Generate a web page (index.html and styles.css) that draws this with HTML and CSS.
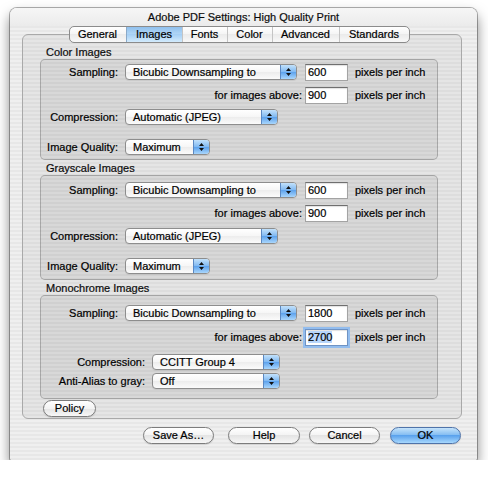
FILE: index.html
```html
<!DOCTYPE html>
<html>
<head>
<meta charset="utf-8">
<link rel="stylesheet" href="styles.css">
</head>
<body>
<div class="window">
  <div class="titlebar">Adobe PDF Settings: High Quality Print</div>
  <div class="pane">
    <div class="tabs">
      <div class="tabbar">
        <span class="tab t-general">General</span>
        <span class="tab t-images sel">Images</span>
        <span class="tab t-fonts">Fonts</span>
        <span class="tab t-color">Color</span>
        <span class="tab t-adv">Advanced</span>
        <span class="tab t-std">Standards</span>
      </div>
    </div>

    <div class="section-title first">Color Images</div>
    <div class="group g-color">
      <div class="row">
        <span class="lbl">Sampling:</span>
        <div class="popup w-sampling"><span class="pv">Bicubic Downsampling to</span><span class="arrows"><svg width="7" height="10" viewBox="0 0 7 10"><path d="M3.5 1 L6 4 L1 4 Z M1 6 L6 6 L3.5 9 Z" fill="#111"/></svg></span></div>
        <span class="field">600</span>
        <span class="unit">pixels per inch</span>
      </div>
      <div class="row gap-a">
        <span class="lbl lbl-for">for images above:</span>
        <span class="field">900</span>
        <span class="unit">pixels per inch</span>
      </div>
      <div class="row gap-b">
        <span class="lbl">Compression:</span>
        <div class="popup w-comp"><span class="pv">Automatic (JPEG)</span><span class="arrows"><svg width="7" height="10" viewBox="0 0 7 10"><path d="M3.5 1 L6 4 L1 4 Z M1 6 L6 6 L3.5 9 Z" fill="#111"/></svg></span></div>
      </div>
      <div class="row gap-c">
        <span class="lbl">Image Quality:</span>
        <div class="popup w-quality"><span class="pv">Maximum</span><span class="arrows"><svg width="7" height="10" viewBox="0 0 7 10"><path d="M3.5 1 L6 4 L1 4 Z M1 6 L6 6 L3.5 9 Z" fill="#111"/></svg></span></div>
      </div>
    </div>

    <div class="section-title">Grayscale Images</div>
    <div class="group g-gray">
      <div class="row">
        <span class="lbl">Sampling:</span>
        <div class="popup w-sampling"><span class="pv">Bicubic Downsampling to</span><span class="arrows"><svg width="7" height="10" viewBox="0 0 7 10"><path d="M3.5 1 L6 4 L1 4 Z M1 6 L6 6 L3.5 9 Z" fill="#111"/></svg></span></div>
        <span class="field">600</span>
        <span class="unit">pixels per inch</span>
      </div>
      <div class="row gap-a">
        <span class="lbl lbl-for">for images above:</span>
        <span class="field">900</span>
        <span class="unit">pixels per inch</span>
      </div>
      <div class="row gap-a">
        <span class="lbl">Compression:</span>
        <div class="popup w-comp"><span class="pv">Automatic (JPEG)</span><span class="arrows"><svg width="7" height="10" viewBox="0 0 7 10"><path d="M3.5 1 L6 4 L1 4 Z M1 6 L6 6 L3.5 9 Z" fill="#111"/></svg></span></div>
      </div>
      <div class="row gap-c">
        <span class="lbl">Image Quality:</span>
        <div class="popup w-quality"><span class="pv">Maximum</span><span class="arrows"><svg width="7" height="10" viewBox="0 0 7 10"><path d="M3.5 1 L6 4 L1 4 Z M1 6 L6 6 L3.5 9 Z" fill="#111"/></svg></span></div>
      </div>
    </div>

    <div class="section-title">Monochrome Images</div>
    <div class="group g-mono">
      <div class="row">
        <span class="lbl">Sampling:</span>
        <div class="popup w-sampling"><span class="pv">Bicubic Downsampling to</span><span class="arrows"><svg width="7" height="10" viewBox="0 0 7 10"><path d="M3.5 1 L6 4 L1 4 Z M1 6 L6 6 L3.5 9 Z" fill="#111"/></svg></span></div>
        <span class="field">1800</span>
        <span class="unit">pixels per inch</span>
      </div>
      <div class="row gap-m1">
        <span class="lbl lbl-for">for images above:</span>
        <span class="field focused"><span class="selection">2700</span></span>
        <span class="unit">pixels per inch</span>
      </div>
      <div class="row gap-m2">
        <span class="lbl lbl-wide">Compression:</span>
        <div class="popup w-mono"><span class="pv">CCITT Group 4</span><span class="arrows"><svg width="7" height="10" viewBox="0 0 7 10"><path d="M3.5 1 L6 4 L1 4 Z M1 6 L6 6 L3.5 9 Z" fill="#111"/></svg></span></div>
      </div>
      <div class="row gap-m3">
        <span class="lbl lbl-wide">Anti-Alias to gray:</span>
        <div class="popup w-mono"><span class="pv">Off</span><span class="arrows"><svg width="7" height="10" viewBox="0 0 7 10"><path d="M3.5 1 L6 4 L1 4 Z M1 6 L6 6 L3.5 9 Z" fill="#111"/></svg></span></div>
      </div>
    </div>

    <div class="policy-row">
      <span class="btn btn-policy">Policy</span>
    </div>
  </div>

  <div class="buttons">
    <span class="btn btn-save">Save As…</span>
    <span class="btn btn-help">Help</span>
    <span class="btn btn-cancel">Cancel</span>
    <span class="btn btn-ok">OK</span>
  </div>
</div>
</body>
</html>
```

FILE: styles.css
```css
html, body {
  margin: 0;
  padding: 0;
  background: #ffffff;
}

body {
  font-family: "Liberation Sans", Arial, sans-serif;
  font-size: 11px;
  color: #000;
  -webkit-text-stroke: 0.2px #000;
}

.window {
  margin: 8px 0 0 10px;
  width: 467px;
  height: 452px;
  box-sizing: border-box;
  display: flex;
  flex-direction: column;
  border-radius: 7px 7px 2px 2px;
  background: repeating-linear-gradient(to bottom, #efefef 0, #efefef 2px, #e7e7e7 2px, #e7e7e7 4px);
  box-shadow: 0 0 0 1px rgba(0, 0, 0, 0.3), 0 7px 13px rgba(0, 0, 0, 0.5);
}

.titlebar {
  height: 18px;
  line-height: 18px;
  text-align: center;
  border-radius: 7px 7px 0 0;
  background: linear-gradient(to bottom, #f6f6f6, #ebebeb);
  color: #111;
}

.pane {
  margin: 8px 15px 0 12px;
  height: 385px;
  box-sizing: border-box;
  border: 1px solid #a9a9a9;
  border-radius: 6px;
  background: rgba(0, 0, 0, 0.04);
  padding: 0 23px 0 17px;
}

.tabs {
  display: flex;
  justify-content: center;
  margin-top: -9px;
  height: 17px;
}

.tabbar {
  display: flex;
  height: 17px;
  box-sizing: border-box;
  border: 1px solid #8b8b8b;
  border-radius: 5px;
  overflow: hidden;
  background: linear-gradient(to bottom, #ffffff, #f4f4f4 50%, #ebebeb 50%, #f8f8f8);
}

.tab {
  line-height: 15px;
  text-align: center;
  border-left: 1px solid #c4c4c4;
}

.tab:first-child {
  border-left: none;
}

.tab.sel {
  background: linear-gradient(to bottom, #8fc0ee, #b3d7f6 50%, #a5cff5 50%, #d3ebfc);
  border-left-color: #8aa9c8;
}

.t-general { width: 56px; }
.t-images { width: 55px; }
.t-fonts { width: 44px; }
.t-color { width: 44px; }
.t-adv { width: 66px; }
.t-std { width: 69px; }

.section-title {
  margin: 2px 0 0 6px;
  height: 13px;
  line-height: 13px;
  color: #111;
}

.section-title.first {
  margin-top: 3px;
}

.group {
  border: 1px solid rgba(0, 0, 0, 0.22);
  border-radius: 5px;
  background: rgba(0, 0, 0, 0.055);
}

.g-color { padding: 3px 0 3px 0; }
.g-gray { padding: 5px 0 4px 0; }
.g-mono { padding: 8px 0 8px 0; }

.row {
  display: flex;
  align-items: center;
  height: 18px;
}

.gap-a { margin-top: 5px; }
.gap-b { margin-top: 4px; }
.gap-c { margin-top: 12px; }
.gap-m1 { margin-top: 6px; }
.gap-m2 { margin-top: 7px; }
.gap-m3 { margin-top: 1px; }

.lbl {
  flex: none;
  width: 77px;
  margin-right: 7px;
  text-align: right;
  white-space: nowrap;
}

.lbl-wide {
  width: 104px;
}

.lbl-for {
  width: 261px;
  margin-right: 3px;
}

.popup {
  flex: none;
  display: flex;
  height: 16px;
  box-sizing: border-box;
  border: 1px solid #8d8d8d;
  border-radius: 4px;
  overflow: hidden;
  background: linear-gradient(to bottom, #ffffff, #f6f6f6 50%, #ececec 50%, #fbfbfb);
  box-shadow: 0 1px 0 rgba(0, 0, 0, 0.06);
}

.pv {
  flex: 1;
  padding-left: 7px;
  line-height: 14px;
  white-space: nowrap;
}

.arrows {
  flex: none;
  width: 15px;
  display: flex;
  align-items: center;
  justify-content: center;
  border-left: 1px solid #5b88c2;
  background: linear-gradient(to bottom, #c2e1fb, #7fb8f1 50%, #5aa0ec 50%, #a9d6fc);
}

.w-sampling { width: 172px; }
.w-comp { width: 153px; }
.w-quality { width: 85px; }
.w-mono { width: 128px; }

.field {
  flex: none;
  width: 43px;
  height: 17px;
  box-sizing: border-box;
  margin-left: 8px;
  padding-left: 2px;
  line-height: 15px;
  background: #fff;
  border: 1px solid #a3a3a3;
  border-top-color: #6f6f6f;
  box-shadow: inset 0 1px 1px rgba(0, 0, 0, 0.12);
}

.lbl-for + .field {
  margin-left: 0;
}

.field.focused {
  border-color: #6f93c4;
  box-shadow: 0 0 0 2px #93bdee, inset 0 1px 1px rgba(0, 0, 0, 0.12);
}

.selection {
  background: #b8d6fb;
}

.unit {
  margin-left: 7px;
  white-space: nowrap;
}

.policy-row {
  display: flex;
  margin-top: 1px;
  padding-left: 3px;
}

.btn {
  flex: none;
  display: block;
  height: 17px;
  box-sizing: border-box;
  line-height: 14px;
  text-align: center;
  border: 1px solid #7c7c7c;
  border-radius: 9px;
  background: linear-gradient(to bottom, #ffffff, #f3f3f3 50%, #e4e4e4 50%, #f7f7f7);
  box-shadow: 0 1px 1px rgba(0, 0, 0, 0.12);
  white-space: nowrap;
}

.btn-policy { width: 53px; }

.buttons {
  display: flex;
  justify-content: flex-end;
  margin-top: 8px;
  padding-right: 16px;
}

.btn-save { width: 71px; margin-right: 14px; }
.btn-help { width: 72px; margin-right: 9px; }
.btn-cancel { width: 71px; margin-right: 10px; }

.btn-ok {
  width: 71px;
  border-color: #4f73a9;
  background: linear-gradient(to bottom, #c5e3fb, #7fbaf1 50%, #5aa2ed 50%, #a8d8fd);
}
```
